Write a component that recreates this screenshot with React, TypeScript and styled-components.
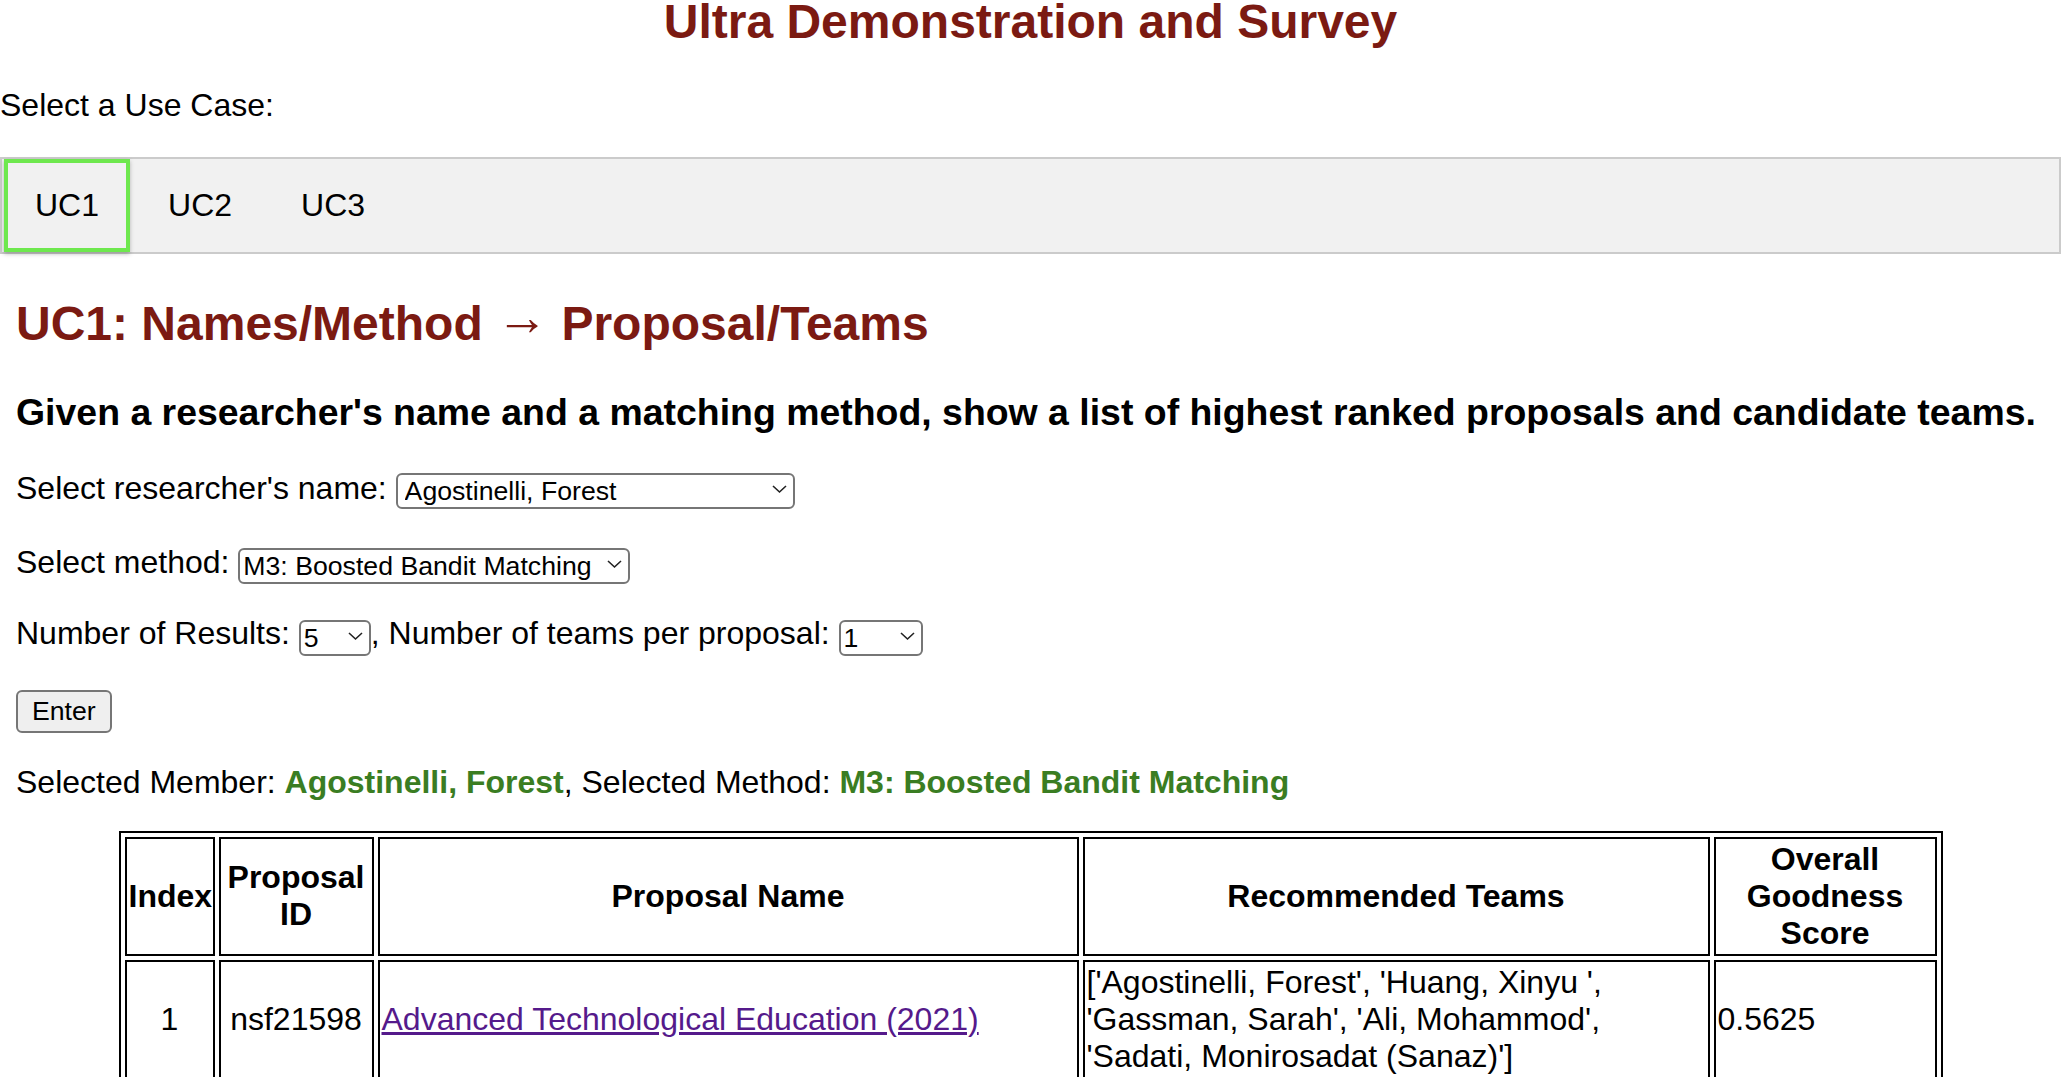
import React, { useState } from 'react';
import styled, { createGlobalStyle } from 'styled-components';

const GlobalStyle = createGlobalStyle`
  html, body {
    margin: 0;
    padding: 0;
    overflow: hidden;
    background: #fff;
  }
  body {
    font-family: "Liberation Sans", Arial, Helvetica, sans-serif;
    font-size: 32px;
    color: #000;
  }
`;

const Title = styled.h1`
  margin: 0;
  font-size: 48px;
  line-height: 44px;
  text-align: center;
  color: #7b1a12;
`;

const UseCaseLabel = styled.p`
  margin: 43px 0 0;
  line-height: 37px;
`;

const TabBar = styled.div`
  display: flex;
  gap: 3px;
  margin-top: 33px;
  height: 93px;
  border: 2px solid #cbcbcb;
  background: #f1f1f1;
`;

const TabButton = styled.button<{ $active?: boolean }>`
  margin: 0 2px;
  padding: 0 27px;
  height: 93px;
  border: 4px solid ${p => (p.$active ? '#6ee84e' : 'transparent')};
  box-shadow: ${p => (p.$active ? '0 2px 4px rgba(0, 0, 0, 0.25)' : 'none')};
  background: inherit;
  font-family: inherit;
  font-size: 32px;
  line-height: 37px;
  color: #000;
  cursor: pointer;
`;

const Content = styled.div`
  padding: 0 16px;
`;

const CaseTitle = styled.h2`
  margin: 42px 0 0;
  font-size: 48px;
  line-height: 55px;
  color: #7b1a12;
`;

const Arrow = styled.span`
  font-size: 52px;
  font-weight: normal;
  line-height: 0;
  vertical-align: 5px;
`;

const CaseDescription = styled.h3`
  margin: 40px 0 0;
  font-size: 37.44px;
  line-height: 43px;
`;

const FieldRow = styled.div<{ $gap: number }>`
  margin-top: ${p => p.$gap}px;
  line-height: 37px;
`;

const SelectWrap = styled.span<{ $w: number; $lift?: number }>`
  position: relative;
  display: inline-block;
  vertical-align: middle;
  top: ${p => -(p.$lift ?? 0)}px;
  width: ${p => p.$w}px;
  height: 36px;
`;

const Select = styled.select<{ $pad: number }>`
  appearance: none;
  -webkit-appearance: none;
  box-sizing: border-box;
  width: 100%;
  height: 100%;
  margin: 0;
  padding: 0 30px 0 ${p => p.$pad}px;
  border: 2px solid #767676;
  border-radius: 6px;
  background: #fff;
  font-family: inherit;
  font-size: 26.67px;
  color: #000;
`;

const Chevron = styled.svg`
  position: absolute;
  right: 8px;
  top: 50%;
  width: 15px;
  height: 9px;
  transform: translateY(-50%);
  pointer-events: none;
`;

const EnterButton = styled.button`
  display: block;
  margin-top: 36px;
  height: 43px;
  padding: 0 14px;
  border: 2px solid #767676;
  border-radius: 6px;
  background: #efefef;
  font-family: inherit;
  font-size: 26.67px;
  color: #000;
`;

const SelectedLine = styled.p`
  margin: 31px 0 0;
  line-height: 37px;
`;

const Picked = styled.b`
  color: #3a7d22;
`;

const ResultsTable = styled.table`
  margin: 30px auto 0;
  width: 1824px;
  table-layout: fixed;
  border: 2px solid #000;
  border-spacing: 4px;
`;

const Col = styled.col<{ $w: number }>`
  width: ${p => p.$w}px;
`;

const HeadCell = styled.th`
  border: 2px solid #000;
  padding: 2px;
  font-weight: bold;
  text-align: center;
`;

const Cell = styled.td<{ $center?: boolean }>`
  border: 2px solid #000;
  padding: 2px;
  text-align: ${p => (p.$center ? 'center' : 'left')};
`;

const ProposalLink = styled.a`
  color: #551a8b;
  text-decoration: underline;
`;

const DropDown = ({
  value,
  width,
  pad = 4,
  lift = 0,
}: {
  value: string;
  width: number;
  pad?: number;
  lift?: number;
}) => (
  <SelectWrap $w={width} $lift={lift}>
    <Select $pad={pad} defaultValue={value}>
      <option>{value}</option>
    </Select>
    <Chevron viewBox="0 0 15 9">
      <path d="M1 1.5 L7.5 7.5 L14 1.5" fill="none" stroke="#222" strokeWidth="1.6" />
    </Chevron>
  </SelectWrap>
);

const columns = [90, 155, 701, 627, 223];

export default function App() {
  const [tab, setTab] = useState('UC1');

  return (
    <>
      <GlobalStyle />
      <Title>Ultra Demonstration and Survey</Title>
      <UseCaseLabel>Select a Use Case:</UseCaseLabel>
      <TabBar>
        {['UC1', 'UC2', 'UC3'].map(t => (
          <TabButton key={t} $active={tab === t} onClick={() => setTab(t)}>
            {t}
          </TabButton>
        ))}
      </TabBar>
      <Content>
        <CaseTitle>
          UC1: Names/Method <Arrow>→</Arrow> Proposal/Teams
        </CaseTitle>
        <CaseDescription>
          Given a researcher's name and a matching method, show a list of highest ranked proposals and candidate teams.
        </CaseDescription>
        <FieldRow $gap={36}>
          Select researcher's name: <DropDown value="Agostinelli, Forest" width={399} pad={7} lift={2} />
        </FieldRow>
        <FieldRow $gap={35}>
          Select method: <DropDown value="M3: Boosted Bandit Matching" width={392} pad={3} />
        </FieldRow>
        <FieldRow $gap={33}>
          Number of Results: <DropDown value="5" width={72} pad={3} />, Number of teams per proposal:{' '}
          <DropDown value="1" width={84} pad={3} />
        </FieldRow>
        <EnterButton>Enter</EnterButton>
        <SelectedLine>
          Selected Member: <Picked>Agostinelli, Forest</Picked>, Selected Method:{' '}
          <Picked>M3: Boosted Bandit Matching</Picked>
        </SelectedLine>
        <ResultsTable>
          <colgroup>
            {columns.map((w, i) => (
              <Col key={i} $w={w} />
            ))}
          </colgroup>
          <thead>
            <tr>
              <HeadCell>Index</HeadCell>
              <HeadCell>Proposal ID</HeadCell>
              <HeadCell>Proposal Name</HeadCell>
              <HeadCell>Recommended Teams</HeadCell>
              <HeadCell>Overall Goodness Score</HeadCell>
            </tr>
          </thead>
          <tbody>
            <tr>
              <Cell $center>1</Cell>
              <Cell $center>nsf21598</Cell>
              <Cell>
                <ProposalLink href="#">Advanced Technological Education (2021)</ProposalLink>
              </Cell>
              <Cell>
                ['Agostinelli, Forest', 'Huang, Xinyu ', 'Gassman, Sarah', 'Ali, Mohammod', 'Sadati, Monirosadat
                (Sanaz)']
              </Cell>
              <Cell>0.5625</Cell>
            </tr>
          </tbody>
        </ResultsTable>
      </Content>
    </>
  );
}
